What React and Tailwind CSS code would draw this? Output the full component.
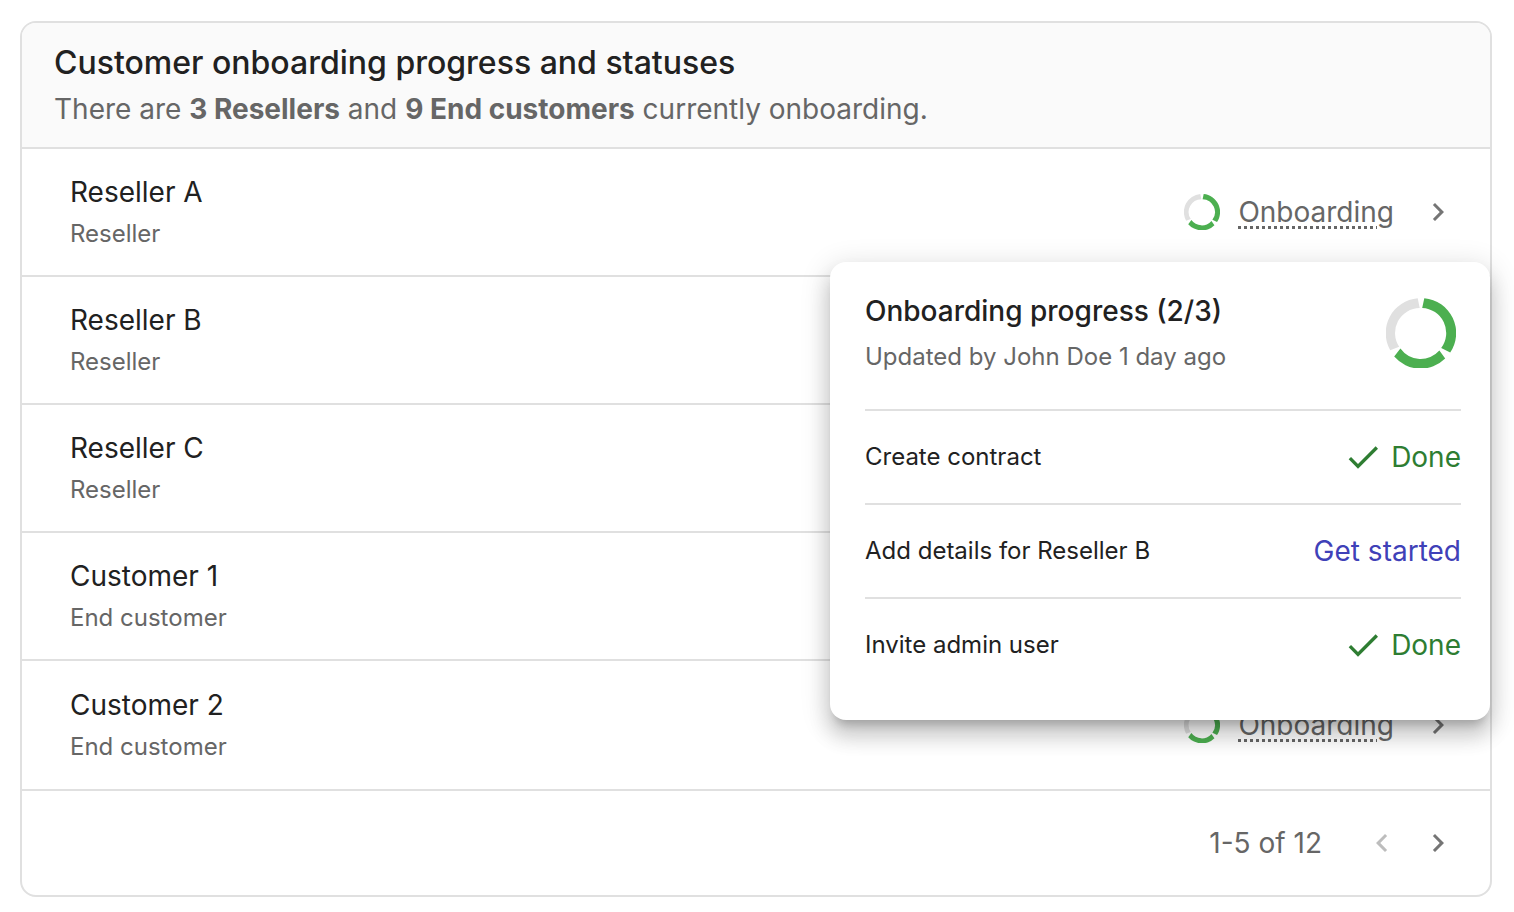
import { useState } from "react";

const customers = [
  { name: "Reseller A", type: "Reseller" },
  { name: "Reseller B", type: "Reseller" },
  { name: "Reseller C", type: "Reseller" },
  { name: "Customer 1", type: "End customer" },
  { name: "Customer 2", type: "End customer" },
];

const steps = [
  { label: "Create contract", done: true },
  { label: "Add details for Reseller B", done: false },
  { label: "Invite admin user", done: true },
];

function ProgressRing({ className }) {
  return (
    <svg viewBox="0 0 70 70" className={className} aria-hidden="true">
      <path fill="#4caf50" d="M38.3 0.2A35 35 0 0 1 64.2 54.6L55.2 50A25 25 0 0 0 36.2 10Z" />
      <path fill="#4caf50" d="M59.2 60.6A35 35 0 0 1 8.2 58.6L14.4 50.6A25 25 0 0 0 53.4 52.6Z" />
      <path fill="#e0e0e0" d="M4.2 52.2A35 35 0 0 1 31.7 0.2L33.7 10A25 25 0 0 0 13.2 48.8Z" />
    </svg>
  );
}

function ChevronRight() {
  return (
    <svg viewBox="0 0 24 24" className="size-9 fill-current" aria-hidden="true">
      <path d="M10 6 8.59 7.41 13.17 12l-4.58 4.59L10 18l6-6z" />
    </svg>
  );
}

function ChevronLeft() {
  return (
    <svg viewBox="0 0 24 24" className="size-9 fill-current" aria-hidden="true">
      <path d="M15.41 7.41 14 6l-6 6 6 6 1.41-1.41L10.83 12z" />
    </svg>
  );
}

function CheckIcon() {
  return (
    <svg viewBox="0 0 24 24" className="size-10 fill-current" aria-hidden="true">
      <path d="M9 16.17 4.83 12l-1.42 1.41L9 19 21 7l-1.41-1.41z" />
    </svg>
  );
}

function ProgressPopover() {
  return (
    <div
      role="dialog"
      aria-label="Onboarding progress"
      className="absolute right-0 top-[113px] z-10 w-[660px] rounded-2xl bg-white pt-7 pr-[29px] pb-[29px] pl-[35px]
        shadow-[0_10px_10px_-6px_rgba(0,0,0,0.2),0_16px_20px_2px_rgba(0,0,0,0.14),0_6px_28px_4px_rgba(0,0,0,0.12)]"
    >
      <div className="flex items-start justify-between pb-[27px]">
        <div>
          <h2 className="text-[28px] leading-[42px] font-medium">Onboarding progress (2/3)</h2>
          <p className="text-[24px] leading-[50px] text-[#666]">Updated by John Doe 1 day ago</p>
        </div>
        <ProgressRing className="mt-2 mr-[5px] size-[70px]" />
      </div>

      <ul>
        {steps.map((step) => (
          <li key={step.label} className="flex h-[94px] items-center justify-between border-t-2 border-[#e0e0e0]">
            <span className="text-[24px]">{step.label}</span>
            {step.done ? (
              <span className="flex items-center gap-2 text-[28px] text-[#2e7d32]">
                <CheckIcon />
                Done
              </span>
            ) : (
              <a href="#details" className="text-[28px] text-[#3f41b8]">Get started</a>
            )}
          </li>
        ))}
      </ul>
    </div>
  );
}

function CustomerRow({ customer, open, onToggle }) {
  return (
    <li className="relative flex items-center justify-between border-b-2 border-[#e0e0e0] py-[21px] pr-[34px] pl-12 last:py-[22px]">
      <div>
        <p className="text-[28px] leading-[44px]">{customer.name}</p>
        <p className="text-[24px] leading-[40px] text-[#666]">{customer.type}</p>
      </div>

      <div className="flex items-center text-[#666]">
        <ProgressRing className="mr-[18px] size-9" />
        <button
          onClick={onToggle}
          aria-expanded={open}
          className="mr-[26px] text-[28px] underline decoration-dotted decoration-[3px] underline-offset-4"
        >
          Onboarding
        </button>
        <a href="#customer" aria-label={`Open ${customer.name}`} className="text-[#757575]">
          <ChevronRight />
        </a>
      </div>

      {open && <ProgressPopover />}
    </li>
  );
}

export default function App() {
  const [openRow, setOpenRow] = useState(0);

  return (
    <main className="bg-white pt-[21px] pr-[22px] pb-[15px] pl-5 font-['Inter',sans-serif] text-[#212121]">
      <section className="rounded-2xl border-2 border-[#e0e0e0]">
        <header className="rounded-t-[14px] border-b-2 border-[#e0e0e0] bg-[#fafafa] px-8 pt-[18px] pb-[14px]">
          <h1 className="text-[32px] leading-[44px] font-medium">Customer onboarding progress and statuses</h1>
          <p className="text-[28px] leading-[48px] text-[#666]">
            There are <strong>3 Resellers</strong> and <strong>9 End customers</strong> currently onboarding.
          </p>
        </header>

        <ul>
          {customers.map((customer, i) => (
            <CustomerRow
              key={customer.name}
              customer={customer}
              open={openRow === i}
              onToggle={() => setOpenRow(openRow === i ? null : i)}
            />
          ))}
        </ul>

        {/* Pagination */}
        <footer className="flex h-[104px] items-center justify-end pr-[34px] text-[#666]">
          <span className="mr-[42px] text-[28px]">1-5 of 12</span>
          <button disabled aria-label="Previous page" className="mr-5 text-[#bdbdbd]">
            <ChevronLeft />
          </button>
          <button aria-label="Next page" className="text-[#757575]">
            <ChevronRight />
          </button>
        </footer>
      </section>
    </main>
  );
}
